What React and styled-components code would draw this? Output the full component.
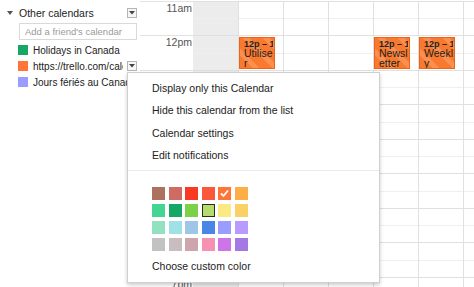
import React from "react";
import styled, { createGlobalStyle } from "styled-components";

const Global = createGlobalStyle`
  html, body { margin: 0; padding: 0; background: #fff; }
  body { font-family: "Liberation Sans", Arial, sans-serif; color: #222; }
  * { box-sizing: border-box; }
`;

const HOURS = ["11am", "12pm", "1pm", "2pm", "3pm", "4pm", "5pm", "6pm", "7pm"];

const EVENTS = {
  1: "Utiliser Trello",
  4: "Newsletter This",
  5: "Weekly meeting",
};

const CALENDARS = [
  { name: "Holidays in Canada", color: "#16a765" },
  { name: "https://trello.com/calendar", color: "#ff7537", menu: true },
  { name: "Jours fériés au Canada", color: "#9a9cff" },
];

const PALETTE = [
  ["#ac725e", "#d06b64", "#f83a22", "#fa573c", "#ff7537", "#ffad46"],
  ["#42d692", "#16a765", "#7bd148", "#b3dc6c", "#fbe983", "#fad165"],
  ["#92e1c0", "#9fe1e7", "#9fc6e7", "#4986e7", "#9a9cff", "#b99aff"],
  ["#c2c2c2", "#cabdbf", "#cca6ac", "#f691b2", "#cd74e6", "#a47ae2"],
];

function DropButton() {
  return (
    <DropBox>
      <svg width="6" height="4" viewBox="0 0 6 4">
        <path d="M0 0 L6 0 L3 3.5 Z" fill="#444" />
      </svg>
    </DropBox>
  );
}

export default function App() {
  return (
    <>
      <Global />
      <Page>
        <Sidebar>
          <SectionHeader>
            <svg width="6" height="4" viewBox="0 0 6 4">
              <path d="M0 0 L6 0 L3 4 Z" fill="#555" />
            </svg>
            <SectionTitle>Other calendars</SectionTitle>
            <DropButton />
          </SectionHeader>
          <FriendInput placeholder="Add a friend's calendar" />
          <CalList>
            {CALENDARS.map((c) => (
              <CalRow key={c.name}>
                <Swatch $color={c.color} />
                <CalName>{c.name}</CalName>
                {c.menu && <DropButton />}
              </CalRow>
            ))}
          </CalList>
        </Sidebar>

        <Grid>
          {HOURS.map((h) => (
            <React.Fragment key={h}>
              <TimeCell>{h}</TimeCell>
              {[0, 1, 2, 3, 4, 5, 6].map((d) => (
                <DayCell key={d} $grey={d === 0} $first={d === 0}>
                  {h === "12pm" && EVENTS[d] && (
                    <Event>
                      <EventTime>12p – 1p</EventTime>
                      <EventTitle>{EVENTS[d]}</EventTitle>
                    </Event>
                  )}
                </DayCell>
              ))}
            </React.Fragment>
          ))}
        </Grid>

        <Menu>
          <MenuItems>
            <MenuItem>Display only this Calendar</MenuItem>
            <MenuItem>Hide this calendar from the list</MenuItem>
            <MenuItem>Calendar settings</MenuItem>
            <MenuItem>Edit notifications</MenuItem>
          </MenuItems>
          <Separator />
          <ColorGrid>
            {PALETTE.flat().map((col, i) => (
              <ColorChip key={col} $color={col} $selected={i === 9}>
                {i === 4 && (
                  <svg width="13" height="13" viewBox="0 0 13 13">
                    <polyline
                      points="3,6.5 5.5,9 10,3.5"
                      fill="none"
                      stroke="#fff"
                      strokeWidth="1.8"
                    />
                  </svg>
                )}
              </ColorChip>
            ))}
          </ColorGrid>
          <CustomColor>Choose custom color</CustomColor>
        </Menu>
      </Page>
    </>
  );
}

const Page = styled.div`
  position: relative;
  width: 474px;
  height: 287px;
  overflow: hidden;
  display: flex;
`;

const Sidebar = styled.aside`
  width: 140px;
  flex-shrink: 0;
  padding: 5px 3px 0 0;
`;

const SectionHeader = styled.div`
  display: flex;
  align-items: center;
  height: 16px;
  padding-left: 7px;
  svg { flex-shrink: 0; }
`;

const SectionTitle = styled.span`
  font-size: 10.5px;
  margin-left: 6px;
  flex: 1;
`;

const DropBox = styled.span`
  width: 10px;
  height: 10px;
  flex-shrink: 0;
  border: 1px solid #b5b5b5;
  background: #f6f6f6;
  display: flex;
  align-items: center;
  justify-content: center;
`;

const FriendInput = styled.input`
  display: block;
  margin: 2px 0 0 19px;
  width: 118px;
  height: 17px;
  border: 1px solid #d9d9d9;
  padding: 0 0 0 5px;
  font-family: "Liberation Sans", Arial, sans-serif;
  font-size: 9.5px;
  outline: none;
  &::placeholder { color: #9a9a9a; }
`;

const CalList = styled.ul`
  list-style: none;
  margin: 2px 0 0;
  padding: 0;
`;

const CalRow = styled.li`
  display: flex;
  align-items: center;
  height: 16px;
  padding-left: 18px;
`;

const Swatch = styled.span`
  width: 10px;
  height: 10px;
  flex-shrink: 0;
  background: ${(p) => p.$color};
  margin-right: 5px;
`;

const CalName = styled.span`
  flex: 1;
  min-width: 0;
  font-size: 10px;
  white-space: nowrap;
  overflow: hidden;
  margin-right: 4px;
`;

const Grid = styled.div`
  flex: 1;
  display: grid;
  grid-template-columns: 53px repeat(6, 45px) 1fr;
  grid-auto-rows: 34.5px;
  margin-top: 0.5px;
`;

const TimeCell = styled.div`
  border-top: 1px solid #e2e2e2;
  text-align: right;
  padding: 0 1px 0 0;
  font-size: 10.5px;
  line-height: 12px;
  color: #555;
`;

const DayCell = styled.div`
  border-top: 1px solid #e0e0e0;
  border-left: ${(p) => (p.$first ? "none" : "1px solid #e0e0e0")};
  background: linear-gradient(#efefef, #efefef) 0 16.5px / 100% 1px no-repeat,
    ${(p) => (p.$grey ? "#ececec" : "#fff")};
  overflow: hidden;
`;

const Event = styled.div`
  width: 36px;
  height: 32px;
  margin: 0.5px 0 0 0;
  padding: 2px 1px 0 4px;
  overflow: hidden;
  background: repeating-linear-gradient(
      45deg,
      rgba(255, 255, 255, 0) 0 9px,
      rgba(255, 255, 255, 0.16) 9px 14px
    ),
    #f97a2e;
  border: 1px solid #e8651c;
  color: #222;
`;

const EventTime = styled.div`
  font-size: 9px;
  font-weight: bold;
  line-height: 9.5px;
  white-space: nowrap;
  overflow: hidden;
`;

const EventTitle = styled.div`
  font-size: 10.5px;
  line-height: 9.5px;
  overflow-wrap: anywhere;
`;

const Menu = styled.div`
  position: absolute;
  left: 127px;
  top: 72px;
  width: 253px;
  height: 211px;
  background: #fff;
  border: 1px solid #cfcfcf;
  box-shadow: 0 2px 4px rgba(0, 0, 0, 0.2);
  padding-top: 4px;
`;

const MenuItems = styled.div`
  display: flex;
  flex-direction: column;
`;

const MenuItem = styled.div`
  height: 22.4px;
  line-height: 22.4px;
  padding-left: 24px;
  font-size: 10.5px;
  color: #222;
`;

const Separator = styled.div`
  height: 1px;
  background: #ebebeb;
  margin-top: 3px;
`;

const ColorGrid = styled.div`
  display: grid;
  grid-template-columns: repeat(6, 13px);
  grid-auto-rows: 13px;
  column-gap: 3.5px;
  row-gap: 4px;
  padding: 16px 0 0 24px;
`;

const ColorChip = styled.div`
  background: ${(p) => p.$color};
  border: ${(p) => (p.$selected ? "1.5px solid #2b2b2b" : "none")};
  svg { display: block; }
`;

const CustomColor = styled.div`
  margin-top: 8px;
  padding-left: 24px;
  font-size: 10.5px;
  line-height: 14px;
  color: #222;
`;
